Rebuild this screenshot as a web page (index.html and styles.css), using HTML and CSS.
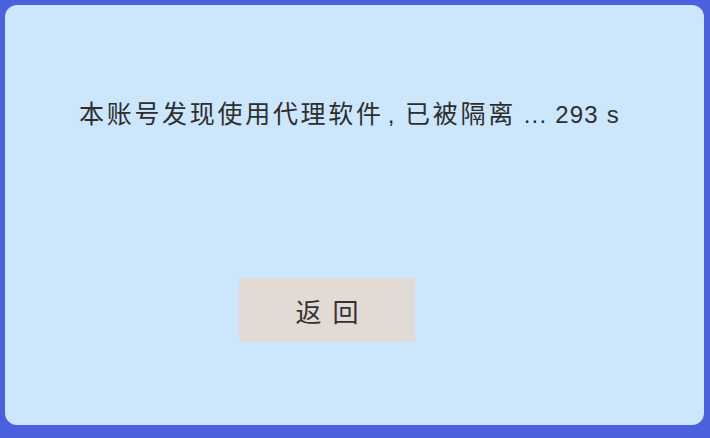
FILE: index.html
```html
<!DOCTYPE html>
<html lang="zh-CN">
<head>
<meta charset="utf-8">
<link rel="stylesheet" href="styles.css">
</head>
<body>
<div class="panel">
  <p class="message"><span class="cjk">本账号发现使用代理软件</span><span class="sep">, </span><span class="cjk">已被隔离</span><span class="latin"> ... 293 s</span></p>
  <div class="actions">
    <button class="back"><span>返</span><span>回</span></button>
  </div>
</div>
</body>
</html>
```
FILE: styles.css
```css
html, body {
  margin: 0;
  padding: 0;
  width: 710px;
  height: 438px;
  background: #4a60dd;
  overflow: hidden;
}
.panel {
  box-sizing: border-box;
  margin: 5px 6px 0 5px;
  height: 420px;
  border-radius: 12px;
  background: #cce6fc;
  display: flex;
  flex-direction: column;
  align-items: flex-start;
}
.message {
  margin: 93px 0 0 74px;
  font-family: "Liberation Sans", "Noto Sans CJK SC", sans-serif;
  font-size: 24px;
  line-height: 32px;
  color: #2e2e2e;
  white-space: nowrap;
}
.cjk {
  font-size: 25px;
  letter-spacing: 2.7px;
}
.sep {
  padding-left: 4px;
  letter-spacing: 2px;
}
.latin {
  letter-spacing: 1.2px;
}
.actions {
  margin: 147px 0 0 234px;
}
.back {
  width: 176px;
  height: 64px;
  border: none;
  background: #e2dad4;
  font-family: "Noto Sans CJK SC", sans-serif;
  font-size: 26px;
  color: #333;
  padding: 0;
  display: flex;
  align-items: center;
  justify-content: center;
  gap: 11px;
}
```
